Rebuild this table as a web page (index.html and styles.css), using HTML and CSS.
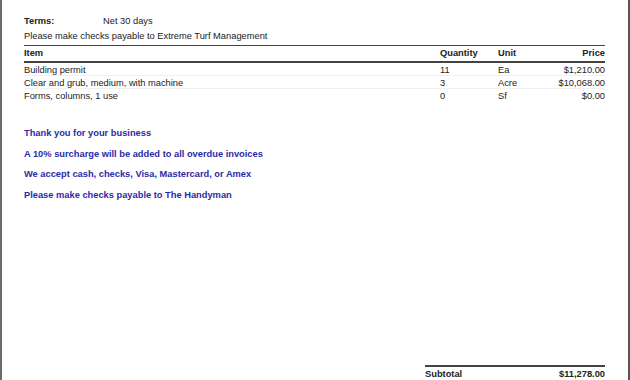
FILE: index.html
```html
<!DOCTYPE html>
<html>
<head>
<meta charset="utf-8">
<link rel="stylesheet" href="styles.css">
</head>
<body>
<div class="page">
  <div class="terms"><span class="terms-label">Terms:</span><span>Net 30 days</span></div>
  <div class="payable">Please make checks payable to Extreme Turf Management</div>
  <table class="items">
    <thead>
      <tr><th class="c-item">Item</th><th class="c-qty">Quantity</th><th class="c-unit">Unit</th><th class="c-price">Price</th></tr>
    </thead>
    <tbody>
      <tr><td>Building permit</td><td>11</td><td>Ea</td><td class="c-price">$1,210.00</td></tr>
      <tr><td>Clear and grub, medium, with machine</td><td>3</td><td>Acre</td><td class="c-price">$10,068.00</td></tr>
      <tr><td>Forms, columns, 1 use</td><td>0</td><td>Sf</td><td class="c-price">$0.00</td></tr>
    </tbody>
  </table>
  <div class="notes">
    <p>Thank you for your business</p>
    <p>A 10% surcharge will be added to all overdue invoices</p>
    <p>We accept cash, checks, Visa, Mastercard, or Amex</p>
    <p>Please make checks payable to The Handyman</p>
  </div>
  <div class="spacer"></div>
  <div class="subtotal"><span>Subtotal</span><span>$11,278.00</span></div>
</div>
</body>
</html>
```

FILE: styles.css
```css
html, body { margin: 0; padding: 0; background: #fff; }
body { width: 630px; height: 380px; overflow: hidden; font-family: "Liberation Sans", Arial, sans-serif; font-size: 9.3px; color: #222; }
.page {
  box-sizing: border-box;
  width: 630px; height: 380px;
  border-left: 2px solid #6a6a6a;
  border-right: 2px solid #555;
  padding: 15px 23px 0 22px;
  display: flex; flex-direction: column;
}
.terms { display: flex; line-height: 13px; }
.terms-label { font-weight: bold; width: 79px; }
.payable { line-height: 14px; margin-top: 1px; }
.items { width: 100%; border-collapse: collapse; margin-top: 2px; }
.items th { font-weight: bold; text-align: left; border-top: 1px solid #444; border-bottom: 2px solid #444; padding: 2px 0 2px 0; line-height: 11px; }
.items td { padding: 2.5px 0 0 0; line-height: 9.5px; border-bottom: 1px solid #f0f0f0; }
.items tbody tr:last-child td { border-bottom: none; }
.c-item { width: 416px; }
.c-qty { width: 58px; }
.c-unit { width: 50px; }
.items .c-price { text-align: right; }
.notes { margin-top: 27px; color: #2b2ba6; font-weight: bold; font-size: 9.3px; }
.notes p { margin: 0 0 9.5px 0; line-height: 11px; }
.spacer { flex: 1; }
.subtotal { margin-left: 401px; border-top: 2px solid #444; display: flex; justify-content: space-between; font-weight: bold; padding-top: 2px; line-height: 11px; margin-bottom: 0; }
```
